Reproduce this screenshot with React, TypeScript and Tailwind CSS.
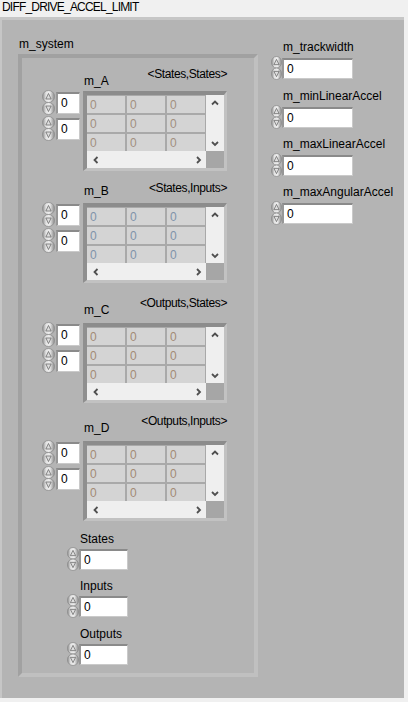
import type { ReactNode } from 'react'

function Spin({ w, h }: { w: number; h: number }) {
  const half = h / 2
  const cx = w / 2
  return (
    <svg width={w} height={h} viewBox={`0 0 ${w} ${h}`} className="shrink-0 block">
      <defs>
        <linearGradient id="spinFill" x1="0" x2="1" y1="0" y2="0">
          <stop offset="0" stopColor="#8c8c8c" />
          <stop offset="0.3" stopColor="#e4e4e4" />
          <stop offset="0.6" stopColor="#ececec" />
          <stop offset="1" stopColor="#8a8a8a" />
        </linearGradient>
      </defs>
      <rect x="0.5" y="0.5" width={w - 1} height={half - 0.5} rx={(w - 1) / 2} ry={half / 2.2} fill="url(#spinFill)" stroke="#8e8e8e" strokeWidth="0.8" />
      <rect x="0.5" y={half} width={w - 1} height={half - 0.5} rx={(w - 1) / 2} ry={half / 2.2} fill="url(#spinFill)" stroke="#8e8e8e" strokeWidth="0.8" />
      <path d={`M${cx} ${half * 0.28} L${cx + 2.6} ${half * 0.72} H${cx - 2.6} Z`} fill="#dedede" stroke="#6f6f6f" strokeWidth="0.8" />
      <path d={`M${cx} ${h - half * 0.28} L${cx + 2.6} ${h - half * 0.72} H${cx - 2.6} Z`} fill="#dedede" stroke="#6f6f6f" strokeWidth="0.8" />
    </svg>
  )
}

function Numeric({ spinW, spinH, boxClass }: { spinW: number; spinH: number; boxClass: string }) {
  return (
    <div className="flex items-center">
      <Spin w={spinW} h={spinH} />
      <div
        className={`${boxClass} bg-white border-t-2 border-l-2 border-r border-b border-t-[#8a8a8a] border-l-[#979797] border-r-[#cacaca] border-b-[#cacaca] pl-[3px] flex items-center text-black`}
      >
        0
      </div>
    </div>
  )
}

function Chevron({ dir }: { dir: 'up' | 'down' | 'left' | 'right' }) {
  const vertical = dir === 'up' || dir === 'down'
  const points = {
    up: '1,4.5 4,1.5 7,4.5',
    down: '1,1 4,4 7,1',
    left: '4.5,1 1.5,4 4.5,7',
    right: '1,1 4,4 1,7',
  }[dir]
  return (
    <svg width={vertical ? 8 : 6} height={vertical ? 6 : 8} className="block">
      <polyline points={points} fill="none" stroke="#4f4f4f" strokeWidth="1.8" />
    </svg>
  )
}

function Matrix({ digitClass }: { digitClass: string }) {
  const cells = Array.from({ length: 9 })
  return (
    <div className="flex flex-col w-[144px] border-t-4 border-l-4 border-r-[3px] border-b-[3px] border-t-[#8c8c8c] border-l-[#8f8f8f] border-r-[#c2c2c2] border-b-[#c2c2c2]">
      <div className="flex">
        <div className="w-[119px] h-[56px] bg-[#a9a9a9] pt-[1px] pr-[1px] grid grid-cols-[38px_38px_38px] grid-rows-[17px_17px_17px] gap-[2px]">
          {cells.map((_, i) => (
            <div key={i} className={`bg-[#d4d4d4] pl-[3px] flex items-center ${digitClass}`}>
              0
            </div>
          ))}
        </div>
        <div className="w-[18px] h-[56px] bg-[#efefef] flex flex-col items-center justify-between pt-[5px] pb-[4px]">
          <Chevron dir="up" />
          <Chevron dir="down" />
        </div>
      </div>
      <div className="flex">
        <div className="w-[119px] h-[17px] bg-[#efefef] flex items-center justify-between pl-[6px] pr-[4px]">
          <Chevron dir="left" />
          <Chevron dir="right" />
        </div>
        <div className="w-[18px] h-[17px] bg-[#a6a6a6]" />
      </div>
    </div>
  )
}

function MatrixBlock({
  name,
  dims,
  nameMb,
  dimsMb,
  blockMt,
  digitClass,
}: {
  name: string
  dims: string
  nameMb: string
  dimsMb: string
  blockMt: string
  digitClass: string
}) {
  return (
    <div className={`flex ml-[20px] ${blockMt}`}>
      <div className="w-[41px] pt-[27px] flex flex-col gap-[1px]">
        <Numeric spinW={13} spinH={25} boxClass="w-[24px] h-[22px] ml-[1px]" />
        <Numeric spinW={13} spinH={25} boxClass="w-[24px] h-[22px] ml-[1px]" />
      </div>
      <div className="flex flex-col">
        <div className="flex justify-between h-[28px] w-[144px]">
          <span className={`self-end pl-[1px] ${nameMb}`}>{name}</span>
          <span className={`self-end tracking-[-0.4px] ${dimsMb}`}>{dims}</span>
        </div>
        <Matrix digitClass={digitClass} />
      </div>
    </div>
  )
}

function Control({ label, mt, labelMl, spinW, boxClass, gap }: {
  label: string
  mt: string
  labelMl: string
  spinW: number
  boxClass: string
  gap: string
}) {
  return (
    <div className={`flex flex-col ${mt}`}>
      <span className={`${labelMl} ${gap} h-[14px]`}>{label}</span>
      <Numeric spinW={spinW} spinH={24} boxClass={boxClass} />
    </div>
  ) as ReactNode
}

export default function App() {
  return (
    <div className="w-[408px] h-[702px] bg-[#f0f0f0] text-black text-[12px] leading-[14px] font-['Liberation_Sans',Arial,sans-serif] overflow-hidden">
      <div className="h-[17px] pl-[2px] tracking-[-0.8px]">DIFF_DRIVE_ACCEL_LIMIT</div>
      <div className="w-[404px] h-[681px] bg-[#b4b4b4] border-t-[3px] border-l-[2px] border-[#c6c6c6] flex">
        <div className="flex flex-col ml-[16px]">
          <span className="mt-[17px] pl-[1px] h-[14px]">m_system</span>
          <div className="mt-[3px] w-[240px] h-[623px] border-4 border-t-[#a1a1a1] border-l-[#a1a1a1] border-r-[#c0c0c0] border-b-[#c0c0c0] flex flex-col">
            <MatrixBlock name="m_A" dims="<States,States>" nameMb="mb-[3px]" dimsMb="mb-[10px]" blockMt="mt-[5px]" digitClass="text-[#a29080]" />
            <MatrixBlock name="m_B" dims="<States,Inputs>" nameMb="mb-[5px]" dimsMb="mb-[8px]" blockMt="mt-[4px]" digitClass="text-[#7f93aa]" />
            <MatrixBlock name="m_C" dims="<Outputs,States>" nameMb="mb-[6px]" dimsMb="mb-[13px]" blockMt="mt-[12px]" digitClass="text-[#a38b74]" />
            <MatrixBlock name="m_D" dims="<Outputs,Inputs>" nameMb="mb-[6px]" dimsMb="mb-[13px]" blockMt="mt-[10px]" digitClass="text-[#a38b74]" />
            <div className="flex flex-col ml-[45px]">
              <Control label="States" mt="mt-[11px]" labelMl="ml-[13px]" gap="mb-[1px]" spinW={12} boxClass="w-[49px] h-[21px]" />
              <Control label="Inputs" mt="mt-[8px]" labelMl="ml-[13px]" gap="mb-[1px]" spinW={12} boxClass="w-[49px] h-[21px]" />
              <Control label="Outputs" mt="mt-[9px]" labelMl="ml-[13px]" gap="mb-[1px]" spinW={12} boxClass="w-[49px] h-[21px]" />
            </div>
          </div>
        </div>
        <div className="flex flex-col ml-[13px]">
          <Control label="m_trackwidth" mt="mt-[20px]" labelMl="ml-[12px]" gap="mb-[2px]" spinW={11} boxClass="w-[71px] h-[21px]" />
          <Control label="m_minLinearAccel" mt="mt-[9px]" labelMl="ml-[12px]" gap="mb-[2px]" spinW={11} boxClass="w-[71px] h-[21px]" />
          <Control label="m_maxLinearAccel" mt="mt-[8px]" labelMl="ml-[12px]" gap="mb-[2px]" spinW={11} boxClass="w-[71px] h-[21px]" />
          <Control label="m_maxAngularAccel" mt="mt-[8px]" labelMl="ml-[12px]" gap="mb-[2px]" spinW={11} boxClass="w-[71px] h-[21px]" />
        </div>
      </div>
    </div>
  )
}
